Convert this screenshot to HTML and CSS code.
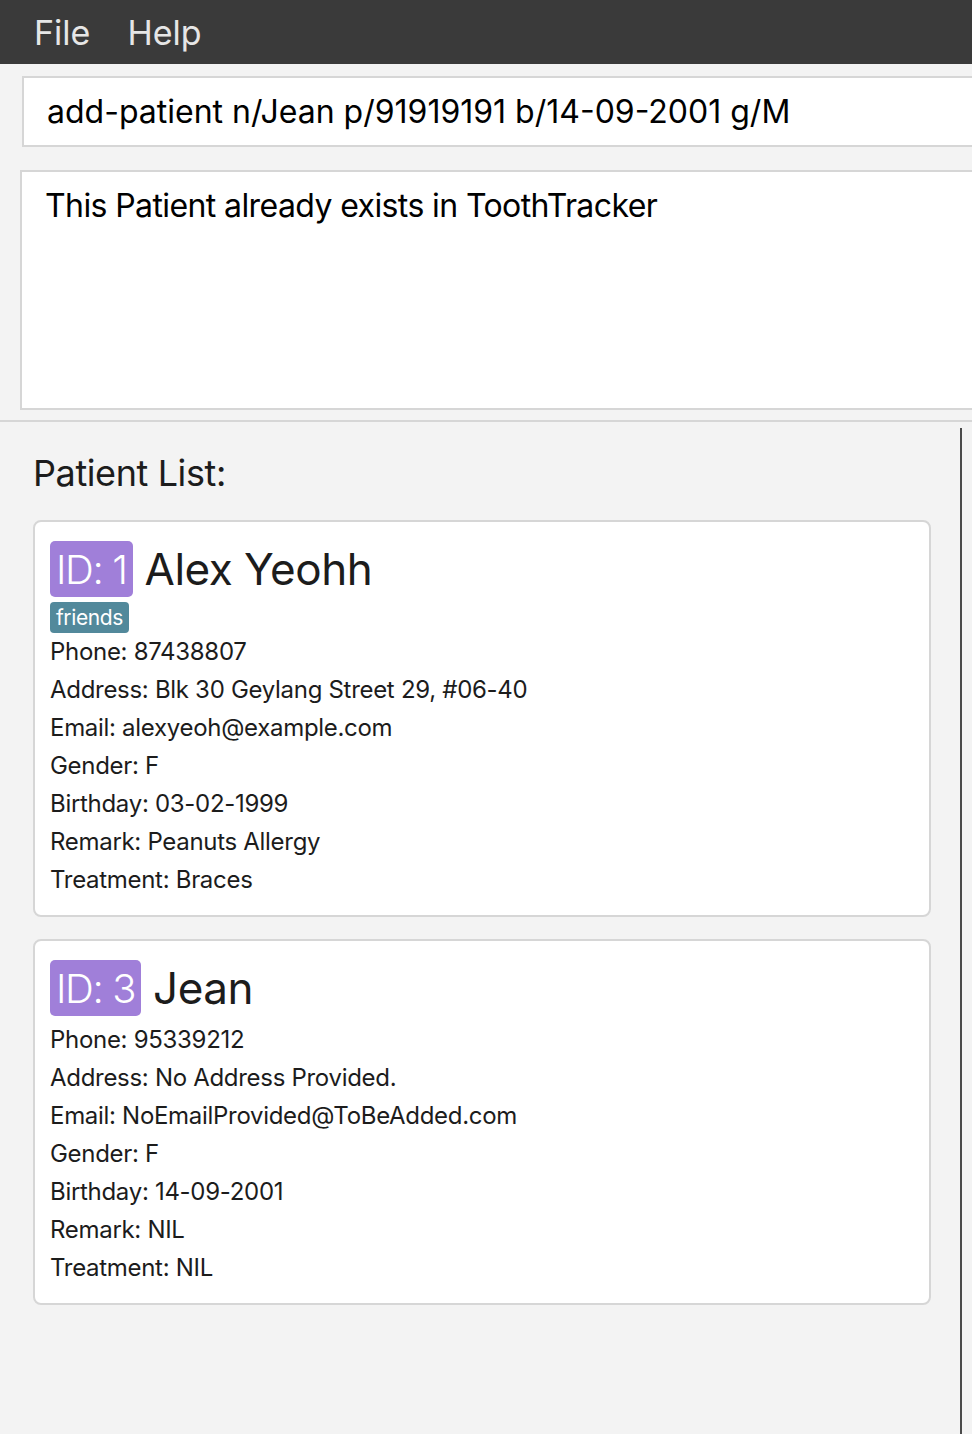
FILE: index.html
```html
<!DOCTYPE html>
<html>
<head>
<meta charset="utf-8">
<link rel="stylesheet" href="styles.css">
</head>
<body>
<div class="menubar">
  <span class="menu-item">File</span>
  <span class="menu-item">Help</span>
</div>
<div class="command-box">add-patient n/Jean p/91919191 b/14-09-2001 g/M</div>
<div class="result-box">This Patient already exists in ToothTracker</div>
<div class="divider"></div>
<div class="list-area">
  <div class="list-content">
    <div class="list-title">Patient List:</div>
    <div class="card">
      <div class="card-header">
        <span class="id-badge">ID: 1</span>
        <span class="name">Alex Yeohh</span>
      </div>
      <div class="tags"><span class="tag">friends</span></div>
      <div class="field">Phone: 87438807</div>
      <div class="field">Address: Blk 30 Geylang Street 29, #06-40</div>
      <div class="field">Email: alexyeoh@example.com</div>
      <div class="field">Gender: F</div>
      <div class="field">Birthday: 03-02-1999</div>
      <div class="field">Remark: Peanuts Allergy</div>
      <div class="field">Treatment: Braces</div>
    </div>
    <div class="card">
      <div class="card-header">
        <span class="id-badge">ID: 3</span>
        <span class="name">Jean</span>
      </div>
      <div class="field">Phone: 95339212</div>
      <div class="field">Address: No Address Provided.</div>
      <div class="field">Email: NoEmailProvided@ToBeAdded.com</div>
      <div class="field">Gender: F</div>
      <div class="field">Birthday: 14-09-2001</div>
      <div class="field">Remark: NIL</div>
      <div class="field">Treatment: NIL</div>
    </div>
  </div>
  <div class="split-edge"></div>
</div>
</body>
</html>
```

FILE: styles.css
```css
html, body {
  margin: 0;
  padding: 0;
}
body {
  width: 972px;
  height: 1434px;
  overflow: hidden;
  background: #f3f3f3;
  font-family: Inter, "Noto Sans", sans-serif;
  color: #1c1c1c;
}
.menubar {
  height: 64px;
  background: #3a3a3a;
  display: flex;
  align-items: center;
  padding-left: 34px;
  gap: 37px;
  box-sizing: border-box;
}
.menu-item {
  color: #e6e6e6;
  font-size: 34px;
  letter-spacing: 0;
}
.command-box {
  margin: 12px -40px 0 22px;
  height: 71px;
  box-sizing: border-box;
  border: 2px solid #d6d6d6;
  background: #fff;
  color: #000;
  font-size: 32px;
  letter-spacing: 0;
  padding-left: 23px;
  display: flex;
  align-items: center;
}
.result-box {
  margin: 23px -40px 0 20px;
  height: 240px;
  box-sizing: border-box;
  border: 2px solid #d6d6d6;
  background: #fff;
  color: #000;
  font-size: 32px;
  letter-spacing: -0.6px;
  padding: 13px 0 0 23px;
  line-height: 42px;
}
.divider {
  height: 2px;
  background: #d6d6d6;
  margin-top: 10px;
}
.list-area {
  display: flex;
  height: 1020px;
}
.list-content {
  width: 960px;
  padding-left: 33px;
  box-sizing: border-box;
}
.split-edge {
  width: 2px;
  margin-top: 6px;
  background: #4a4a4a;
}
.list-title {
  font-size: 36px;
  letter-spacing: -0.4px;
  line-height: 44px;
  margin-top: 29px;
  margin-bottom: 25px;
  color: #1c1c1c;
}
.card {
  width: 898px;
  box-sizing: border-box;
  background: #fff;
  border: 2px solid #d6d6d6;
  border-radius: 8px;
  padding: 19px 0 16px 15px;
  margin-bottom: 22px;
}
.card-header {
  display: flex;
  align-items: center;
  height: 56px;
  margin-bottom: 5px;
}
.id-badge {
  background: #a07fd9;
  color: #fff;
  border-radius: 5px;
  height: 56px;
  display: flex;
  align-items: center;
  padding: 0 6px 0 6px;
  font-size: 40px;
  letter-spacing: -1.4px;
  font-weight: 300;
}
.name {
  font-size: 44px;
  letter-spacing: -0.5px;
  margin-left: 12px;
  color: #1c1c1c;
}
.tags {
  display: flex;
  gap: 6px;
}
.tag {
  background: #52899b;
  color: #fff;
  border-radius: 4px;
  height: 31px;
  line-height: 31px;
  padding: 0 6px;
  font-size: 21px;
  letter-spacing: -0.4px;
}
.field {
  font-size: 24px;
  line-height: 38px;
  letter-spacing: -0.3px;
}
```
